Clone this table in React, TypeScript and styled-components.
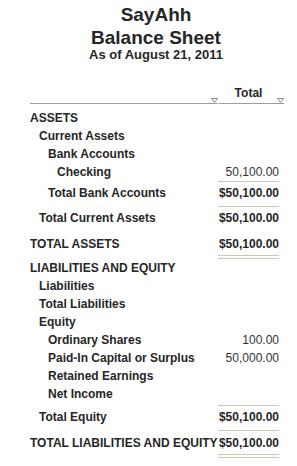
import styled, { createGlobalStyle } from "styled-components";

const GlobalStyle = createGlobalStyle`
  html, body {
    margin: 0;
    padding: 0;
    background: #ffffff;
  }
  body {
    font-family: "Liberation Sans", Arial, Helvetica, sans-serif;
    color: #262626;
  }
`;

const Page = styled.div`
  width: 297px;
  padding-top: 3px;
  box-sizing: border-box;
`;

const Heading = styled.div`
  text-align: center;
  font-weight: bold;
  padding-left: 15px;

  .company,
  .title {
    font-size: 19px;
    line-height: 23px;
  }

  .date {
    font-size: 13px;
    line-height: 12px;
  }
`;

const Report = styled.div`
  margin: 23px 0 0 30px;
  width: 254px;
  font-size: 12px;
  font-weight: bold;
`;

const HeaderRow = styled.div`
  display: flex;
  gap: 1px;
  margin-bottom: 5px;
`;

const HeaderCell = styled.div<{ $width?: number }>`
  display: flex;
  align-items: flex-end;
  flex: ${(p) => (p.$width ? `0 0 ${p.$width}px` : "1")};
  height: 19px;
  border-bottom: 1px solid #9c9c9c;

  .label {
    flex: 1;
    text-align: center;
    line-height: 18px;
    align-self: flex-start;
    padding-left: 1px;
  }

  svg {
    display: block;
    flex: 0 0 auto;
  }
`;

type Kind = "total" | "grand";

const Row = styled.div<{ $level: number; $kind?: Kind; $line?: boolean; $space?: number }>`
  display: flex;
  line-height: 18px;
  margin-top: ${(p) => p.$space ?? 0}px;

  .label {
    flex: 1;
    white-space: nowrap;
    padding-left: ${(p) => p.$level * 9}px;
    padding-top: ${(p) => (p.$kind === "grand" ? 4 : p.$kind === "total" ? 3 : 0)}px;
  }

  .amount {
    flex: 0 0 61px;
    margin-right: 5px;
    text-align: right;
    white-space: nowrap;
    border-top: ${(p) =>
      p.$kind ? `1px solid ${p.$line ? "#c9c9b6" : "transparent"}` : "none"};
    padding-top: ${(p) => (p.$kind === "grand" ? 3 : p.$kind === "total" ? 2 : 0)}px;
    padding-bottom: ${(p) => (p.$kind === "grand" ? 2 : p.$kind === "total" ? 4 : 0)}px;
    border-bottom: ${(p) => (p.$kind === "grand" ? "4px double #c9c9b6" : "none")};
  }
`;

const Value = styled.span<{ $plain?: boolean }>`
  font-weight: ${(p) => (p.$plain ? "normal" : "bold")};
  color: ${(p) => (p.$plain ? "#333333" : "#262626")};
`;

function SortArrow() {
  return (
    <svg width="7" height="5" viewBox="0 0 7 5">
      <polygon points="0.5,0.5 6.5,0.5 3.5,4.5" fill="#ffffff" stroke="#8a8a8a" strokeWidth="1" />
    </svg>
  );
}

type Line = {
  label: string;
  level: number;
  amount?: string;
  plain?: boolean;
  kind?: Kind;
  line?: boolean;
  space?: number;
};

const lines: Line[] = [
  { label: "ASSETS", level: 0 },
  { label: "Current Assets", level: 1 },
  { label: "Bank Accounts", level: 2 },
  { label: "Checking", level: 3, amount: "50,100.00", plain: true },
  { label: "Total Bank Accounts", level: 2, amount: "$50,100.00", kind: "total", line: true },
  { label: "Total Current Assets", level: 1, amount: "$50,100.00", kind: "total", line: true },
  { label: "TOTAL ASSETS", level: 0, amount: "$50,100.00", kind: "grand" },
  { label: "LIABILITIES AND EQUITY", level: 0 },
  { label: "Liabilities", level: 1 },
  { label: "Total Liabilities", level: 1 },
  { label: "Equity", level: 1 },
  { label: "Ordinary Shares", level: 2, amount: "100.00", plain: true },
  { label: "Paid-In Capital or Surplus", level: 2, amount: "50,000.00", plain: true },
  { label: "Retained Earnings", level: 2 },
  { label: "Net Income", level: 2 },
  { label: "Total Equity", level: 1, amount: "$50,100.00", kind: "total", line: true, space: 2 },
  { label: "TOTAL LIABILITIES AND EQUITY", level: 0, amount: "$50,100.00", kind: "grand", line: true },
];

export default function App() {
  return (
    <Page>
      <GlobalStyle />
      <Heading>
        <div className="company">SayAhh</div>
        <div className="title">Balance Sheet</div>
        <div className="date">As of August 21, 2011</div>
      </Heading>
      <Report>
        <HeaderRow>
          <HeaderCell>
            <div className="label" />
            <SortArrow />
          </HeaderCell>
          <HeaderCell $width={65}>
            <div className="label">Total</div>
            <SortArrow />
          </HeaderCell>
        </HeaderRow>
        {lines.map((l) => (
          <Row key={l.label} $level={l.level} $kind={l.kind} $line={l.line} $space={l.space}>
            <div className="label">{l.label}</div>
            <div className="amount">
              {l.amount && <Value $plain={l.plain}>{l.amount}</Value>}
            </div>
          </Row>
        ))}
      </Report>
    </Page>
  );
}
